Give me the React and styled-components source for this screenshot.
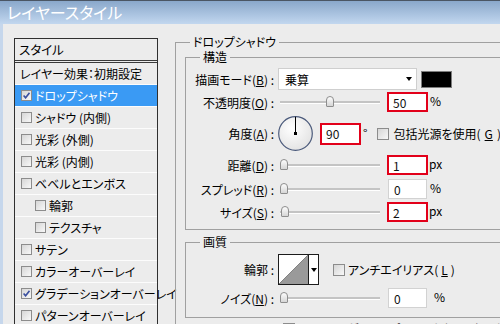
import React from 'react';
import styled, { createGlobalStyle } from 'styled-components';

const GlobalStyle = createGlobalStyle`
  html, body {
    margin: 0;
    padding: 0;
    background: #ececec;
  }
`;

const Window = styled.div`
  width: 500px;
  height: 324px;
  overflow: hidden;
  background: #ececec;
  display: flex;
  flex-direction: column;
  font-family: "Noto Sans CJK JP", "Noto Sans", sans-serif;
  font-feature-settings: "palt";
  font-size: 12px;
  color: #000;
`;

const TitleBar = styled.div`
  flex: none;
  height: 24px;
  box-sizing: border-box;
  border-top: 1px solid #4b5664;
  background: linear-gradient(#8aa8cb, #c2d7ef);
  color: #fff;
  font-size: 16px;
  line-height: 23px;
  padding-left: 7px;
`;

const Body = styled.div`
  flex: 1;
  min-height: 0;
  display: flex;
  align-items: flex-start;
  gap: 17px;
  border-left: 3px solid #c6d7ec;
  padding: 11px 0 0 11px;
`;

// left: list of effects
const StyleList = styled.div`
  flex: none;
  width: 144px;
  box-sizing: border-box;
  margin-top: 3px;
  border: 1px solid #2f2f2f;
  border-bottom: none;
`;

const ListHeader = styled.div`
  height: 21px;
  line-height: 21px;
  padding-left: 4px;
  border-bottom: 3px double #3a3a3a;
  font-size: 12.5px;
`;

const ListItem = styled.div`
  height: 21px;
  border-bottom: 1px solid #fcfcfc;
  display: flex;
  align-items: center;
  gap: 3px;
  white-space: nowrap;
  padding-left: ${p => p.$pad}px;
  background: ${p => (p.$active ? '#3a9af4' : 'transparent')};
  color: ${p => (p.$active ? '#fff' : '#000')};
`;

const Box = styled.span`
  flex: none;
  width: ${p => p.$size}px;
  height: ${p => p.$size}px;
  box-sizing: border-box;
  border: 1px solid #8c8c8c;
  background: linear-gradient(135deg, #d6d6d6 0%, #f8f8f8 100%);
  display: inline-flex;
  align-items: center;
  justify-content: center;
`;

function CheckBox({ checked, size = 11 }) {
  return (
    <Box $size={size}>
      {checked && (
        <svg width="7" height="7" viewBox="0 0 7 7">
          <path d="M0.6 3.4 L2.6 5.8 L6.5 0.8" stroke="#3a4f9f" strokeWidth="1.6" fill="none" />
        </svg>
      )}
    </Box>
  );
}

// right: group boxes
const Group = styled.fieldset`
  margin: ${p => p.$mt || 0}px 0 0 0;
  min-width: 0;
  box-sizing: border-box;
  border: 1px solid #a0a0a0;
  padding: ${p => p.$pad};
  ${p => p.$width && `width: ${p.$width}px; flex: none;`}
`;

const GroupTitle = styled.legend`
  padding: 0 3px;
  margin-left: ${p => p.$offset}px;
  line-height: 14px;
  font-size: 12px;
`;

const Row = styled.div`
  display: grid;
  grid-template-columns: 88px auto;
  column-gap: 4px;
  align-items: center;
  height: ${p => p.$h}px;
`;

const Label = styled.span`
  text-align: right;
  white-space: nowrap;
`;

const Controls = styled.div`
  display: flex;
  align-items: center;
  white-space: nowrap;
`;

const Select = styled.div`
  flex: none;
  width: 139px;
  height: 22px;
  box-sizing: border-box;
  background: #fff;
  border: 1px solid #cfcfcf;
  display: flex;
  align-items: center;
  justify-content: space-between;
  padding: 0 4px 0 6px;
`;

const Caret = styled.span`
  width: 0;
  height: 0;
  border-left: 3px solid transparent;
  border-right: 3px solid transparent;
  border-top: 4px solid #000;
`;

const Swatch = styled.div`
  flex: none;
  width: 31px;
  height: 17px;
  box-sizing: border-box;
  margin-left: 4px;
  background: #000;
  border: 1px solid #7d7d7d;
`;

const Track = styled.div`
  position: relative;
  flex: none;
  width: 100px;
  height: 14px;
  margin-left: 2px;
  &::before {
    content: '';
    position: absolute;
    left: 0;
    right: 0;
    top: 6px;
    height: 2px;
    background: #c4c4c4;
    border-bottom: 1px solid #fff;
  }
`;

const Thumb = styled.span`
  position: absolute;
  top: 1px;
  width: 8px;
  height: 11px;
  box-sizing: border-box;
  border: 1px solid #8e8e8e;
  border-radius: 4px 4px 1px 1px;
  background: linear-gradient(#fdfdfd, #d6d6d6);
`;

function Slider({ pos }) {
  return (
    <Track>
      <Thumb style={{ left: Math.round(pos * 92) }} />
    </Track>
  );
}

const Field = styled.div`
  flex: none;
  box-sizing: border-box;
  height: ${p => p.$h || 20}px;
  width: ${p => (p.$mark ? 41 : 39)}px;
  margin-left: ${p => (p.$mark ? p.$ml : p.$ml + 1)}px;
  margin-right: ${p => (p.$mark ? 0 : 1)}px;
  background: #fff;
  border: ${p => (p.$mark ? '2px solid #e2001a' : '1px solid #d2d2d2')};
  padding-left: ${p => (p.$mark ? 4 : 5)}px;
  display: flex;
  align-items: center;
  color: #111;
`;

const Unit = styled.span`
  margin-left: ${p => p.$ml || 2}px;
  margin-top: -3px;
`;

const CheckLabel = styled.label`
  display: flex;
  align-items: center;
  gap: ${p => p.$gap || 4}px;
  margin-left: ${p => p.$ml || 0}px;
  white-space: nowrap;
`;

const ContourPicker = styled.div`
  flex: none;
  display: flex;
  width: 41px;
  height: 31px;
  box-sizing: border-box;
  border: 1px solid #1c1c1c;
  background: #fff;
`;

const ContourArrow = styled.div`
  flex: 1;
  border-left: 1px solid #1c1c1c;
  display: flex;
  align-items: center;
  justify-content: center;
`;

const BottomRow = styled.div`
  display: flex;
  margin-top: 2px;
  padding-left: 98px;
`;

const Key = ({ k }) => (
  <>
    (<u>{k}</u>)
  </>
);

function Dial() {
  return (
    <svg width="35" height="35" viewBox="0 0 35 35">
      <defs>
        <radialGradient id="dialFill" cx="0.4" cy="0.35" r="0.7">
          <stop offset="0" stopColor="#ffffff" />
          <stop offset="1" stopColor="#e2e2e2" />
        </radialGradient>
      </defs>
      <circle cx="17.5" cy="17.5" r="16.8" fill="url(#dialFill)" stroke="#4c5b7c" strokeWidth="1.2" />
      <line x1="17.5" y1="17.5" x2="17.5" y2="0.8" stroke="#000" strokeWidth="1" />
      <rect x="16" y="16" width="3" height="3" fill="#000" />
    </svg>
  );
}

function ContourPreview() {
  return (
    <ContourPicker>
      <svg width="29" height="29" viewBox="0 0 29 29">
        <polygon points="0,29 29,0 29,29" fill="#9a9a9a" />
        <line x1="0" y1="29" x2="29" y2="0" stroke="#6e6e6e" strokeWidth="0.8" />
      </svg>
      <ContourArrow>
        <Caret />
      </ContourArrow>
    </ContourPicker>
  );
}

const effects = [
  { name: 'ドロップシャドウ', checked: true, active: true },
  { name: 'シャドウ (内側)' },
  { name: '光彩 (外側)' },
  { name: '光彩 (内側)' },
  { name: 'ベベルとエンボス' },
  { name: '輪郭', indent: true },
  { name: 'テクスチャ', indent: true },
  { name: 'サテン' },
  { name: 'カラーオーバーレイ' },
  { name: 'グラデーションオーバーレイ', checked: true },
  { name: 'パターンオーバーレイ' },
  { name: '境界線' },
];

export default function App() {
  return (
    <Window>
      <GlobalStyle />
      <TitleBar>レイヤースタイル</TitleBar>
      <Body>
        <StyleList>
          <ListHeader>スタイル</ListHeader>
          <ListItem $pad={5}>レイヤー効果：初期設定</ListItem>
          {effects.map(e => (
            <ListItem key={e.name} $pad={e.indent ? 20 : 6} $active={e.active}>
              <CheckBox checked={e.checked} />
              {e.name}
            </ListItem>
          ))}
        </StyleList>

        <Group $width={340} $pad="1px 0 0 9px">
          <GroupTitle $offset={5}>ドロップシャドウ</GroupTitle>

          <Group $pad="4px 0 6px 0">
            <GroupTitle $offset={14}>構造</GroupTitle>
            <Row $h={22}>
              <Label>描画モード<Key k="B" /> :</Label>
              <Controls>
                <Select>
                  乗算
                  <Caret />
                </Select>
                <Swatch />
              </Controls>
            </Row>
            <Row $h={24}>
              <Label>不透明度<Key k="O" /> :</Label>
              <Controls>
                <Slider pos={0.5} />
                <Field $mark $ml={7}>50</Field>
                <Unit>%</Unit>
              </Controls>
            </Row>
            <Row $h={39}>
              <Label>角度<Key k="A" /> :</Label>
              <Controls>
                <Dial />
                <Field $mark $ml={7} $h={22}>90</Field>
                <Unit $ml={2}>°</Unit>
                <CheckLabel $ml={10}>
                  <CheckBox size={12} />
                  包括光源を使用<Key k="G" />
                </CheckLabel>
              </Controls>
            </Row>
            <Row $h={24}>
              <Label>距離<Key k="D" /> :</Label>
              <Controls>
                <Slider pos={0} />
                <Field $mark $ml={7}>1</Field>
                <Unit $ml={1}>px</Unit>
              </Controls>
            </Row>
            <Row $h={24}>
              <Label>スプレッド<Key k="R" /> :</Label>
              <Controls>
                <Slider pos={0} />
                <Field $ml={7}>0</Field>
                <Unit>%</Unit>
              </Controls>
            </Row>
            <Row $h={22}>
              <Label>サイズ<Key k="S" /> :</Label>
              <Controls>
                <Slider pos={0.01} />
                <Field $mark $ml={7}>2</Field>
                <Unit $ml={1}>px</Unit>
              </Controls>
            </Row>
          </Group>

          <Group $mt={5} $pad="4px 0 7px 0">
            <GroupTitle $offset={14}>画質</GroupTitle>
            <Row $h={33}>
              <Label>輪郭 :</Label>
              <Controls>
                <ContourPreview />
                <CheckLabel $ml={14} $gap={3}>
                  <CheckBox size={12} />
                  アンチエイリアス<Key k="L" />
                </CheckLabel>
              </Controls>
            </Row>
            <Row $h={24}>
              <Label>ノイズ<Key k="N" /> :</Label>
              <Controls>
                <Slider pos={0} />
                <Field $ml={7}>0</Field>
                <Unit $ml={6}>%</Unit>
              </Controls>
            </Row>
          </Group>

          <BottomRow>
            <CheckLabel $gap={8}>
              <CheckBox size={12} checked />
              レイヤーがドロップシャドウをノックアウト<Key k="U" />
            </CheckLabel>
          </BottomRow>
        </Group>
      </Body>
    </Window>
  );
}
